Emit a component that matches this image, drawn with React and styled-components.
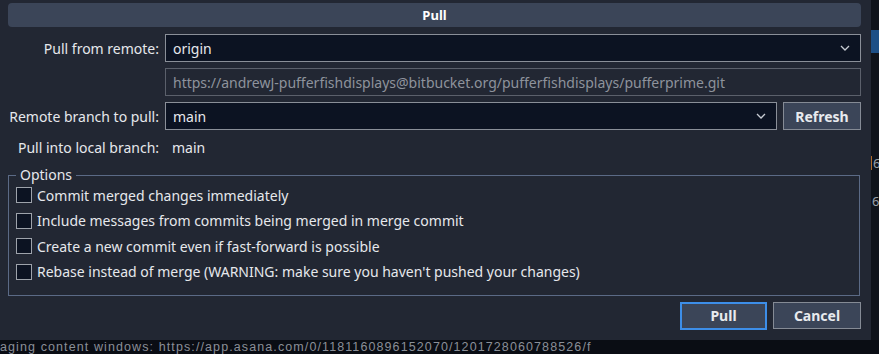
import React from 'react';
import styled, { createGlobalStyle } from 'styled-components';

const GlobalStyle = createGlobalStyle`
  html, body {
    margin: 0;
    padding: 0;
    background: #0b0f18;
    overflow: hidden;
  }
  body {
    font-family: "Noto Sans", "Open Sans", sans-serif;
    font-size: 14px;
    color: #e6e8ec;
  }
`;

const Screen = styled.div`
  width: 879px;
  height: 354px;
  display: flex;
  flex-direction: column;
`;

const Upper = styled.div`
  display: flex;
  height: 340px;
`;

const Dialog = styled.div`
  width: 871px;
  background: #222733;
  box-sizing: border-box;
  padding: 3px 10px 0 8px;
  display: flex;
  flex-direction: column;
`;

const Behind = styled.div`
  flex: 1;
  background: #0f131b;
  display: flex;
  flex-direction: column;
  padding-top: 30px;
  overflow: hidden;
`;

const BlueBar = styled.div`
  height: 23px;
  background: #1d4f86;
`;

const BehindText = styled.div`
  margin-top: ${p => p.$top}px;
  font-size: 13px;
  color: #9aa0aa;
  padding-left: 1px;
  border-left: ${p => (p.$mark ? '1px solid #b06a2a' : 'none')};
  line-height: 14px;
`;

const StatusLine = styled.div`
  flex: 1;
  background: #0a0d14;
  color: #8a8f98;
  font-family: "Liberation Sans", Arial, sans-serif;
  font-size: 12.5px;
  letter-spacing: 1.1px;
  line-height: 14px;
  white-space: nowrap;
  overflow: hidden;
`;

const TitleBar = styled.div`
  height: 24px;
  background: #3b4558;
  border-radius: 4px;
  display: flex;
  align-items: center;
  justify-content: center;
  font-weight: 700;
  font-size: 13px;
  color: #ffffff;
`;

const Form = styled.div`
  display: grid;
  grid-template-columns: 151px 1fr;
  column-gap: 6px;
  row-gap: 6px;
  margin-top: 7px;
  align-items: center;
`;

const Label = styled.div`
  text-align: ${p => (p.$left ? 'left' : 'right')};
  padding-left: ${p => p.$indent || 0}px;
  white-space: nowrap;
`;

const Field = styled.div`
  height: 28px;
  box-sizing: border-box;
  border: 1px solid ${p => (p.$muted ? '#5b606b' : '#8a8f98')};
  background: ${p => (p.$muted ? '#222733' : '#0c1322')};
  color: ${p => (p.$muted ? '#8e939c' : '#e6e8ec')};
  display: flex;
  align-items: center;
  padding: 0 10px 0 7px;
  flex: 1;
  white-space: nowrap;
  overflow: hidden;
`;

const FieldText = styled.span`
  flex: 1;
`;

const Chevron = () => (
  <svg width="10" height="6" viewBox="0 0 10 6">
    <path d="M1 1 L5 5 L9 1" fill="none" stroke="#c8ccd3" strokeWidth="1.3" />
  </svg>
);

const FieldRow = styled.div`
  display: flex;
  gap: 6px;
`;

const Button = styled.button`
  height: ${p => (p.$h || 28)}px;
  width: ${p => p.$w}px;
  box-sizing: border-box;
  background: #3b4558;
  border: ${p => (p.$primary ? '2px solid #3d8ee8' : '1px solid #858b95')};
  color: #e8eaee;
  font-family: inherit;
  font-size: 14px;
  font-weight: 700;
  padding: 0;
  cursor: pointer;
`;

const LocalValue = styled.div`
  padding-left: 7px;
  height: 22px;
  display: flex;
  align-items: center;
`;

const Options = styled.fieldset`
  margin: 9px 1px 0 0;
  border: 1px solid #5b6a86;
  padding: 2px 0 13px 7px;
  display: flex;
  flex-direction: column;
  gap: 5.5px;
`;

const Legend = styled.legend`
  padding: 0 4px;
  margin-left: 0;
  line-height: 16px;
`;

const CheckRow = styled.label`
  display: flex;
  align-items: center;
  gap: 5px;
  height: 20px;
`;

const Box = styled.span`
  width: 16px;
  height: 16px;
  box-sizing: border-box;
  border: 1px solid #9ea3ab;
  background: #0c1322;
`;

const Footer = styled.div`
  display: flex;
  justify-content: flex-end;
  gap: 6px;
  margin-top: 6px;
  align-items: center;
`;

const options = [
  'Commit merged changes immediately',
  'Include messages from commits being merged in merge commit',
  'Create a new commit even if fast-forward is possible',
  "Rebase instead of merge (WARNING: make sure you haven't pushed your changes)",
];

export default function App() {
  return (
    <Screen>
      <GlobalStyle />
      <Upper>
        <Dialog>
          <TitleBar>Pull</TitleBar>
          <Form>
            <Label>Pull from remote:</Label>
            <Field>
              <FieldText>origin</FieldText>
              <Chevron />
            </Field>
            <div />
            <Field $muted>
              https://andrewJ-pufferfishdisplays@bitbucket.org/pufferfishdisplays/pufferprime.git
            </Field>
            <Label>Remote branch to pull:</Label>
            <FieldRow>
              <Field>
                <FieldText>main</FieldText>
                <Chevron />
              </Field>
              <Button $w={78}>Refresh</Button>
            </FieldRow>
            <Label $left $indent={10}>Pull into local branch:</Label>
            <LocalValue>main</LocalValue>
          </Form>
          <Options>
            <Legend>Options</Legend>
            {options.map(o => (
              <CheckRow key={o}>
                <Box />
                {o}
              </CheckRow>
            ))}
          </Options>
          <Footer>
            <Button $primary $w={87} $h={28}>Pull</Button>
            <Button $w={88} $h={27}>Cancel</Button>
          </Footer>
        </Dialog>
        <Behind>
          <BlueBar />
          <BehindText $top={103} $mark>6</BehindText>
          <BehindText $top={24}>6</BehindText>
        </Behind>
      </Upper>
      <StatusLine>
        aging content windows: https://app.asana.com/0/1181160896152070/1201728060788526/f
      </StatusLine>
    </Screen>
  );
}
